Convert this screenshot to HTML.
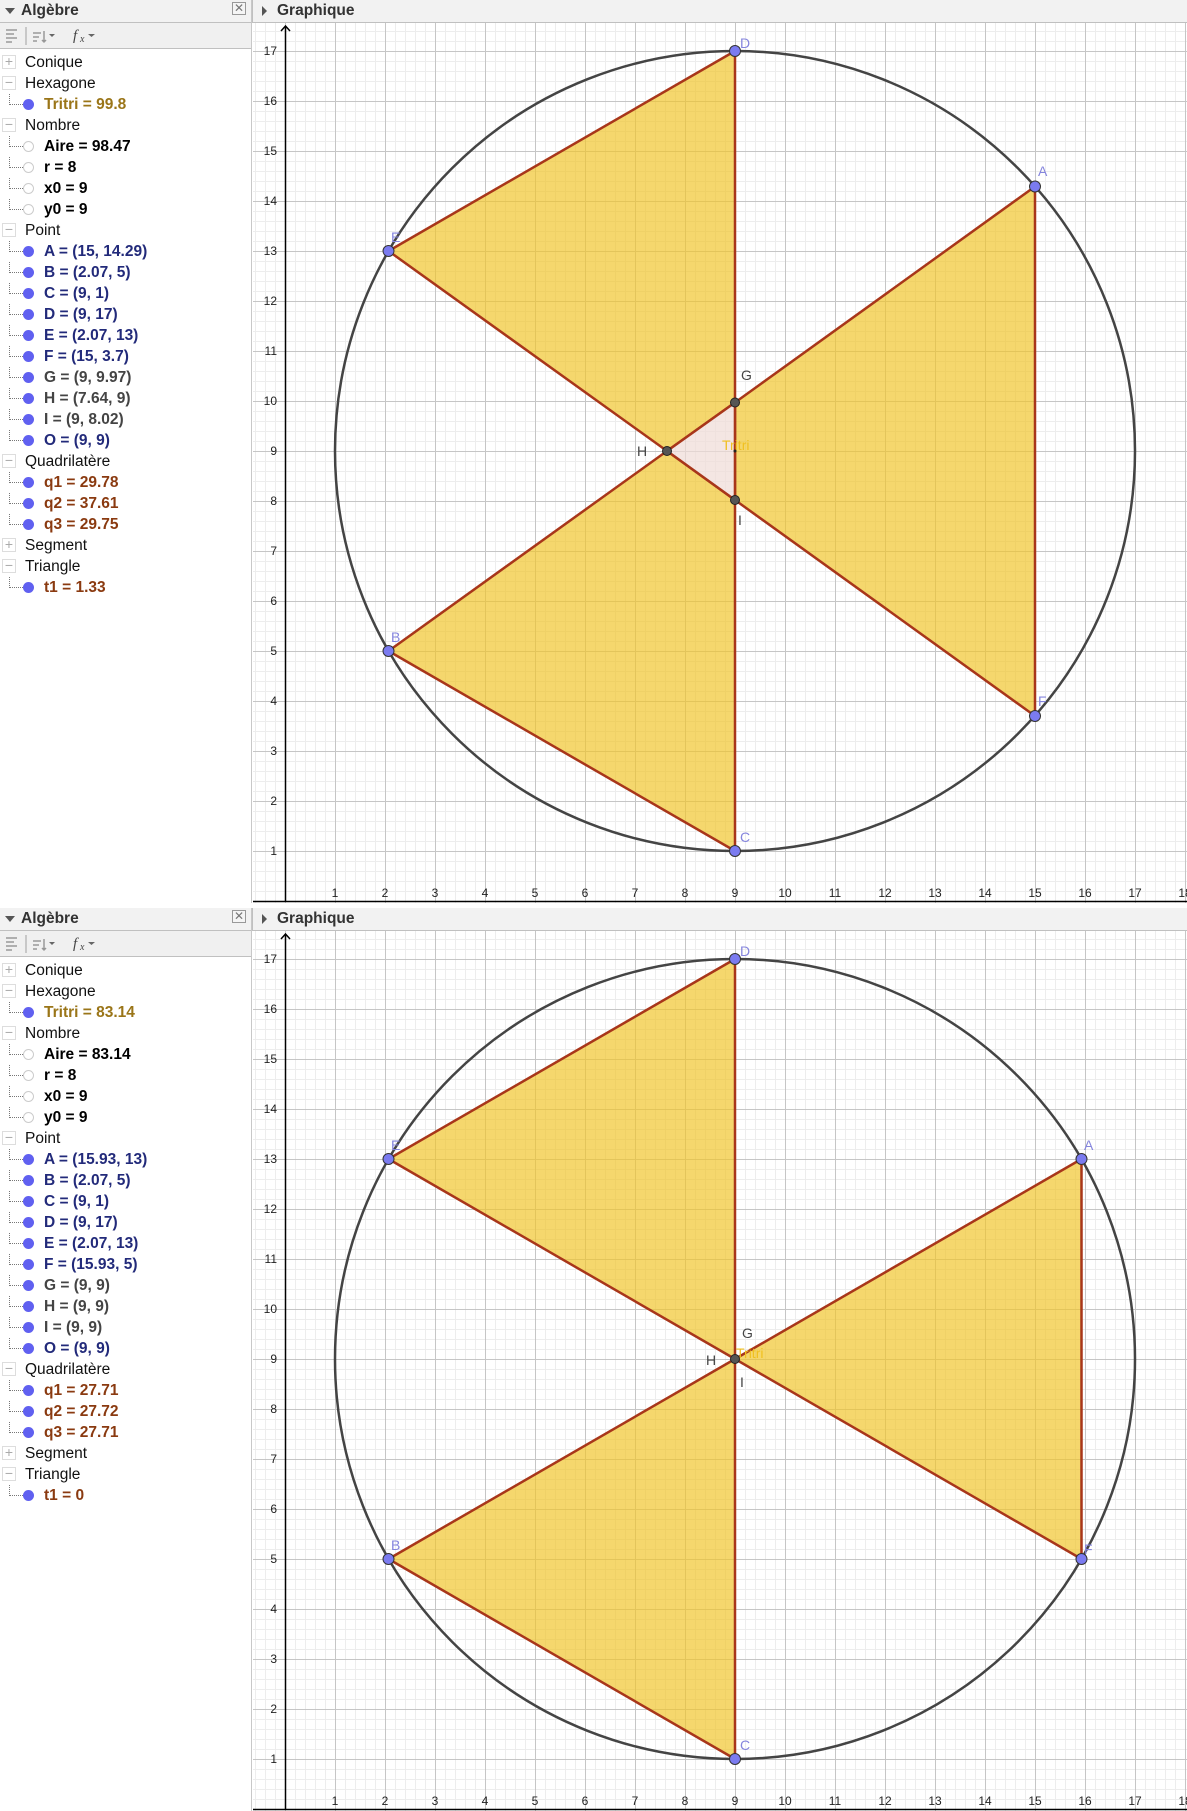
<!DOCTYPE html>
<html><head><meta charset="utf-8">
<style>
*{margin:0;padding:0;box-sizing:border-box}
body{width:1187px;height:1811px;position:relative;overflow:hidden;background:#fff;font-family:"Liberation Sans",Arial,sans-serif}
.alg{position:absolute;left:0;width:252px;height:903px;background:#fff;border-right:1px solid #c8c8c8}
.hdr{position:absolute;left:0;top:0;width:100%;height:23px;background:#f2f2f2;border-bottom:1px solid #c0c0c0}
.hdr .t{position:absolute;left:21px;top:2px;font-weight:bold;font-size:15.5px;color:#333}
.hdr .tri{position:absolute;left:5px;top:8px;width:0;height:0;border-left:5px solid transparent;border-right:5px solid transparent;border-top:6px solid #555}
.hdr .x{position:absolute;left:232px;top:2px;width:14px;height:13px;border:1px solid #999;background:#f5f5f5;font-size:12px;line-height:11px;text-align:center;color:#777}
.tb{position:absolute;left:0;top:23px;width:100%;height:26px;background:#f0f0f0;border-bottom:1px solid #c0c0c0}
.row{position:absolute;left:0;height:21px;font-size:15.5px;line-height:21px;white-space:nowrap}
.box{position:absolute;left:2px;top:3px;width:14px;height:14px;border:1px solid #ddd;background:#fff;color:#aaa;font-size:14px;line-height:11px;text-align:center}
.cat{position:absolute;left:25px;color:#111}
.conn{position:absolute;left:9px;top:0;width:14px;height:11px;border-left:1px dotted #777;border-bottom:1px dotted #777}
.dot{position:absolute;left:23px;top:5px;width:11px;height:11px;border-radius:50%;background:#6060f0}
.odot{position:absolute;left:23px;top:5px;width:11px;height:11px;border-radius:50%;border:1px solid #ccc;background:#fff}
.v{position:absolute;left:44px;font-weight:bold}
.bl{color:#222a7a}.gd{color:#9a7518}.br{color:#8a3a10}.bk{color:#000}.gr{color:#444}
.gh{position:absolute;left:252px;width:935px;height:23px;background:#f2f2f2;border-bottom:1px solid #c0c0c0;border-left:1px solid #c0c0c0}
.gh .t{position:absolute;left:24px;top:2px;font-weight:bold;font-size:15.5px;color:#333}
.gh .tri{position:absolute;left:9px;top:6px;border-top:5px solid transparent;border-bottom:5px solid transparent;border-left:5px solid #555}
svg.g{position:absolute;left:253px}
</style></head><body>

<svg width="0" height="0" style="position:absolute">
<defs>
<pattern id="minor" x="285" y="1" width="10" height="10" patternUnits="userSpaceOnUse"><path d="M0 0.5H10M0.5 0V10" stroke="#ededed" stroke-width="1" fill="none"/></pattern>
<pattern id="major" x="285" y="1" width="50" height="50" patternUnits="userSpaceOnUse"><path d="M0 0.5H50M0.5 0V50" stroke="#c6c6c6" stroke-width="1" fill="none"/></pattern>
</defs></svg>

<!-- ===== PANEL 1 ===== -->
<div class="alg" style="top:0">
 <div class="hdr"><div class="tri"></div><div class="t">Algèbre</div><div class="x">✕</div></div>
 <div class="tb">
  <svg width="120" height="26" style="position:absolute;left:0;top:0"><g stroke="#999" stroke-width="1.5"><path d="M6 7H17M6 11H14M6 15H17M6 19H12"/><path d="M26 4V22" stroke="#bbb"/><path d="M33 10H41M33 14H39M33 18H37M44 8V19M42 17L44 19L46 17"/></g><path d="M49 11H55L52 14Z" fill="#666"/><text x="73" y="17" font-family="Liberation Serif" font-style="italic" font-size="15" fill="#444">f</text><text x="80" y="19" font-family="Liberation Serif" font-style="italic" font-size="10" fill="#444">x</text><path d="M88 11H95L91.5 14Z" fill="#666"/></svg>
 </div>
 <div class="row" style="top:52px"><div class="box">+</div><span class="cat">Conique</span></div>
 <div class="row" style="top:73px"><div class="box">−</div><span class="cat">Hexagone</span></div>
 <div class="row" style="top:94px"><div class="conn"></div><div class="dot"></div><span class="v gd">Tritri = 99.8</span></div>
 <div class="row" style="top:115px"><div class="box">−</div><span class="cat">Nombre</span></div>
 <div class="row" style="top:136px"><div class="conn"></div><div class="odot"></div><span class="v bk">Aire = 98.47</span></div>
 <div class="row" style="top:157px"><div class="conn"></div><div class="odot"></div><span class="v bk">r = 8</span></div>
 <div class="row" style="top:178px"><div class="conn"></div><div class="odot"></div><span class="v bk">x0 = 9</span></div>
 <div class="row" style="top:199px"><div class="conn"></div><div class="odot"></div><span class="v bk">y0 = 9</span></div>
 <div class="row" style="top:220px"><div class="box">−</div><span class="cat">Point</span></div>
 <div class="row" style="top:241px"><div class="conn"></div><div class="dot"></div><span class="v bl">A = (15, 14.29)</span></div>
 <div class="row" style="top:262px"><div class="conn"></div><div class="dot"></div><span class="v bl">B = (2.07, 5)</span></div>
 <div class="row" style="top:283px"><div class="conn"></div><div class="dot"></div><span class="v bl">C = (9, 1)</span></div>
 <div class="row" style="top:304px"><div class="conn"></div><div class="dot"></div><span class="v bl">D = (9, 17)</span></div>
 <div class="row" style="top:325px"><div class="conn"></div><div class="dot"></div><span class="v bl">E = (2.07, 13)</span></div>
 <div class="row" style="top:346px"><div class="conn"></div><div class="dot"></div><span class="v bl">F = (15, 3.7)</span></div>
 <div class="row" style="top:367px"><div class="conn"></div><div class="dot"></div><span class="v gr">G = (9, 9.97)</span></div>
 <div class="row" style="top:388px"><div class="conn"></div><div class="dot"></div><span class="v gr">H = (7.64, 9)</span></div>
 <div class="row" style="top:409px"><div class="conn"></div><div class="dot"></div><span class="v gr">I = (9, 8.02)</span></div>
 <div class="row" style="top:430px"><div class="conn"></div><div class="dot"></div><span class="v bl">O = (9, 9)</span></div>
 <div class="row" style="top:451px"><div class="box">−</div><span class="cat">Quadrilatère</span></div>
 <div class="row" style="top:472px"><div class="conn"></div><div class="dot"></div><span class="v br">q1 = 29.78</span></div>
 <div class="row" style="top:493px"><div class="conn"></div><div class="dot"></div><span class="v br">q2 = 37.61</span></div>
 <div class="row" style="top:514px"><div class="conn"></div><div class="dot"></div><span class="v br">q3 = 29.75</span></div>
 <div class="row" style="top:535px"><div class="box">+</div><span class="cat">Segment</span></div>
 <div class="row" style="top:556px"><div class="box">−</div><span class="cat">Triangle</span></div>
 <div class="row" style="top:577px"><div class="conn"></div><div class="dot"></div><span class="v br">t1 = 1.33</span></div>
</div>
<div class="gh" style="top:0"><div class="tri"></div><div class="t">Graphique</div></div>
<svg class="g" style="top:0" width="934" height="903" viewBox="253 0 934 903" font-family="Liberation Sans,sans-serif">
 <rect x="253" y="23" width="934" height="880" fill="url(#minor)"/>
 <rect x="253" y="23" width="934" height="880" fill="url(#major)"/>
 <g fill="rgba(240,196,40,0.68)" stroke="#a8361a" stroke-width="2.5" stroke-linejoin="round">
  <polygon points="735,51 388.5,251 667,451 735,402.5"/>
  <polygon points="1035,186.5 735,402.5 735,500 1035,716"/>
  <polygon points="388.5,651 667,451 735,500 735,851"/>
 </g>
 <polygon points="735,402.5 667,451 735,500" fill="rgba(240,220,215,0.7)" stroke="#a8361a" stroke-width="2.5"/>
 <circle cx="735" cy="451" r="400" fill="none" stroke="#444" stroke-width="2.5"/>
 <g stroke="#000" stroke-width="1.5" fill="none"><path d="M285.5 26V901M253 901.5H1187M281 31L285.5 26L290 31"/></g>
 <g font-size="12" fill="#222" text-anchor="middle">
  <text x="335" y="897">1</text><text x="385" y="897">2</text><text x="435" y="897">3</text><text x="485" y="897">4</text><text x="535" y="897">5</text><text x="585" y="897">6</text><text x="635" y="897">7</text><text x="685" y="897">8</text><text x="735" y="897">9</text><text x="785" y="897">10</text><text x="835" y="897">11</text><text x="885" y="897">12</text><text x="935" y="897">13</text><text x="985" y="897">14</text><text x="1035" y="897">15</text><text x="1085" y="897">16</text><text x="1135" y="897">17</text><text x="1185" y="897">18</text>
 </g>
 <g font-size="12" fill="#222" text-anchor="end">
  <text x="277" y="855">1</text><text x="277" y="805">2</text><text x="277" y="755">3</text><text x="277" y="705">4</text><text x="277" y="655">5</text><text x="277" y="605">6</text><text x="277" y="555">7</text><text x="277" y="505">8</text><text x="277" y="455">9</text><text x="277" y="405">10</text><text x="277" y="355">11</text><text x="277" y="305">12</text><text x="277" y="255">13</text><text x="277" y="205">14</text><text x="277" y="155">15</text><text x="277" y="105">16</text><text x="277" y="55">17</text>
 </g>
 <text x="722" y="450" font-size="14" fill="#f0c020">Tritri</text>
 <circle cx="735" cy="451" r="1.5" fill="#222"/>
 <g fill="#7b7bf0" stroke="#333" stroke-width="1">
  <circle cx="1035" cy="186.5" r="5.5"/><circle cx="388.5" cy="651" r="5.5"/><circle cx="735" cy="851" r="5.5"/><circle cx="735" cy="51" r="5.5"/><circle cx="388.5" cy="251" r="5.5"/><circle cx="1035" cy="716" r="5.5"/>
 </g>
 <g fill="#555" stroke="#222" stroke-width="1"><circle cx="735" cy="402.5" r="4.5"/><circle cx="667" cy="451" r="4.5"/><circle cx="735" cy="500" r="4.5"/></g>
 <g font-size="14" fill="#8585dd">
  <text x="1038" y="176">A</text><text x="740" y="48">D</text><text x="391" y="242">E</text><text x="391" y="642">B</text><text x="740" y="842">C</text><text x="1038" y="706">F</text>
 </g>
 <g font-size="14" fill="#444"><text x="741" y="380">G</text><text x="637" y="456">H</text><text x="738" y="525">I</text></g>
</svg>

<!-- ===== PANEL 2 ===== -->
<div style="position:absolute;left:0;top:903px;width:1187px;height:5px;background:#fff"></div>
<div class="alg" style="top:908px">
 <div class="hdr"><div class="tri"></div><div class="t">Algèbre</div><div class="x">✕</div></div>
 <div class="tb">
  <svg width="120" height="26" style="position:absolute;left:0;top:0"><g stroke="#999" stroke-width="1.5"><path d="M6 7H17M6 11H14M6 15H17M6 19H12"/><path d="M26 4V22" stroke="#bbb"/><path d="M33 10H41M33 14H39M33 18H37M44 8V19M42 17L44 19L46 17"/></g><path d="M49 11H55L52 14Z" fill="#666"/><text x="73" y="17" font-family="Liberation Serif" font-style="italic" font-size="15" fill="#444">f</text><text x="80" y="19" font-family="Liberation Serif" font-style="italic" font-size="10" fill="#444">x</text><path d="M88 11H95L91.5 14Z" fill="#666"/></svg>
 </div>
 <div class="row" style="top:52px"><div class="box">+</div><span class="cat">Conique</span></div>
 <div class="row" style="top:73px"><div class="box">−</div><span class="cat">Hexagone</span></div>
 <div class="row" style="top:94px"><div class="conn"></div><div class="dot"></div><span class="v gd">Tritri = 83.14</span></div>
 <div class="row" style="top:115px"><div class="box">−</div><span class="cat">Nombre</span></div>
 <div class="row" style="top:136px"><div class="conn"></div><div class="odot"></div><span class="v bk">Aire = 83.14</span></div>
 <div class="row" style="top:157px"><div class="conn"></div><div class="odot"></div><span class="v bk">r = 8</span></div>
 <div class="row" style="top:178px"><div class="conn"></div><div class="odot"></div><span class="v bk">x0 = 9</span></div>
 <div class="row" style="top:199px"><div class="conn"></div><div class="odot"></div><span class="v bk">y0 = 9</span></div>
 <div class="row" style="top:220px"><div class="box">−</div><span class="cat">Point</span></div>
 <div class="row" style="top:241px"><div class="conn"></div><div class="dot"></div><span class="v bl">A = (15.93, 13)</span></div>
 <div class="row" style="top:262px"><div class="conn"></div><div class="dot"></div><span class="v bl">B = (2.07, 5)</span></div>
 <div class="row" style="top:283px"><div class="conn"></div><div class="dot"></div><span class="v bl">C = (9, 1)</span></div>
 <div class="row" style="top:304px"><div class="conn"></div><div class="dot"></div><span class="v bl">D = (9, 17)</span></div>
 <div class="row" style="top:325px"><div class="conn"></div><div class="dot"></div><span class="v bl">E = (2.07, 13)</span></div>
 <div class="row" style="top:346px"><div class="conn"></div><div class="dot"></div><span class="v bl">F = (15.93, 5)</span></div>
 <div class="row" style="top:367px"><div class="conn"></div><div class="dot"></div><span class="v gr">G = (9, 9)</span></div>
 <div class="row" style="top:388px"><div class="conn"></div><div class="dot"></div><span class="v gr">H = (9, 9)</span></div>
 <div class="row" style="top:409px"><div class="conn"></div><div class="dot"></div><span class="v gr">I = (9, 9)</span></div>
 <div class="row" style="top:430px"><div class="conn"></div><div class="dot"></div><span class="v bl">O = (9, 9)</span></div>
 <div class="row" style="top:451px"><div class="box">−</div><span class="cat">Quadrilatère</span></div>
 <div class="row" style="top:472px"><div class="conn"></div><div class="dot"></div><span class="v br">q1 = 27.71</span></div>
 <div class="row" style="top:493px"><div class="conn"></div><div class="dot"></div><span class="v br">q2 = 27.72</span></div>
 <div class="row" style="top:514px"><div class="conn"></div><div class="dot"></div><span class="v br">q3 = 27.71</span></div>
 <div class="row" style="top:535px"><div class="box">+</div><span class="cat">Segment</span></div>
 <div class="row" style="top:556px"><div class="box">−</div><span class="cat">Triangle</span></div>
 <div class="row" style="top:577px"><div class="conn"></div><div class="dot"></div><span class="v br">t1 = 0</span></div>
</div>
<div class="gh" style="top:908px"><div class="tri"></div><div class="t">Graphique</div></div>
<svg class="g" style="top:908px" width="934" height="903" viewBox="253 0 934 903" font-family="Liberation Sans,sans-serif">
 <rect x="253" y="23" width="934" height="880" fill="url(#minor)"/>
 <rect x="253" y="23" width="934" height="880" fill="url(#major)"/>
 <g fill="rgba(240,196,40,0.68)" stroke="#a8361a" stroke-width="2.5" stroke-linejoin="round">
  <polygon points="735,51 388.5,251 735,451"/>
  <polygon points="1081.5,251 735,451 1081.5,651"/>
  <polygon points="388.5,651 735,451 735,851"/>
 </g>
 <circle cx="735" cy="451" r="400" fill="none" stroke="#444" stroke-width="2.5"/>
 <g stroke="#000" stroke-width="1.5" fill="none"><path d="M285.5 26V901M253 901.5H1187M281 31L285.5 26L290 31"/></g>
 <g font-size="12" fill="#222" text-anchor="middle">
  <text x="335" y="897">1</text><text x="385" y="897">2</text><text x="435" y="897">3</text><text x="485" y="897">4</text><text x="535" y="897">5</text><text x="585" y="897">6</text><text x="635" y="897">7</text><text x="685" y="897">8</text><text x="735" y="897">9</text><text x="785" y="897">10</text><text x="835" y="897">11</text><text x="885" y="897">12</text><text x="935" y="897">13</text><text x="985" y="897">14</text><text x="1035" y="897">15</text><text x="1085" y="897">16</text><text x="1135" y="897">17</text><text x="1185" y="897">18</text>
 </g>
 <g font-size="12" fill="#222" text-anchor="end">
  <text x="277" y="855">1</text><text x="277" y="805">2</text><text x="277" y="755">3</text><text x="277" y="705">4</text><text x="277" y="655">5</text><text x="277" y="605">6</text><text x="277" y="555">7</text><text x="277" y="505">8</text><text x="277" y="455">9</text><text x="277" y="405">10</text><text x="277" y="355">11</text><text x="277" y="305">12</text><text x="277" y="255">13</text><text x="277" y="205">14</text><text x="277" y="155">15</text><text x="277" y="105">16</text><text x="277" y="55">17</text>
 </g>
 <text x="736" y="450" font-size="14" fill="#f0c020">Tritri</text>
 <g fill="#7b7bf0" stroke="#333" stroke-width="1">
  <circle cx="1081.5" cy="251" r="5.5"/><circle cx="388.5" cy="651" r="5.5"/><circle cx="735" cy="851" r="5.5"/><circle cx="735" cy="51" r="5.5"/><circle cx="388.5" cy="251" r="5.5"/><circle cx="1081.5" cy="651" r="5.5"/>
 </g>
 <circle cx="735" cy="451" r="4.5" fill="#555" stroke="#222" stroke-width="1"/>
 <g font-size="14" fill="#8585dd">
  <text x="1084" y="242">A</text><text x="740" y="48">D</text><text x="391" y="242">E</text><text x="391" y="642">B</text><text x="740" y="842">C</text><text x="1084" y="646">F</text>
 </g>
 <g font-size="14" fill="#444"><text x="742" y="430">G</text><text x="706" y="457">H</text><text x="740" y="479">I</text></g>
</svg>
</body></html>
